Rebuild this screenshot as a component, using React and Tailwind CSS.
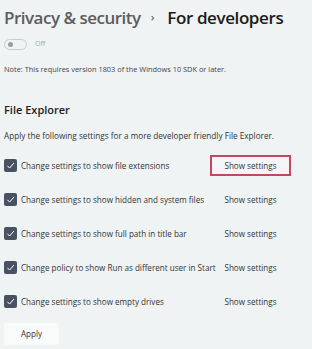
export default function App() {
  const rows = [
    "Change settings to show file extensions",
    "Change settings to show hidden and system files",
    "Change settings to show full path in title bar",
    "Change policy to show Run as different user in Start",
    "Change settings to show empty drives",
  ];
  return (
    <div
      className="h-[349px] w-[312px] overflow-hidden bg-[#eff3f4] pl-[4px] text-[#2a2a2a]"
      style={{ fontFamily: '"Open Sans", "Noto Sans", sans-serif' }}
    >
      <div className="flex h-[33px] items-center pt-[2px]">
        <span className="text-[17px] font-semibold tracking-[-0.5px] text-[#5c5c5c]">Privacy &amp; security</span>
        <span className="ml-[10px] mr-[13px] text-[11px] font-semibold text-[#6a6a6a]">›</span>
        <span className="text-[17px] font-semibold tracking-[-0.4px] text-[#1b1b1b]">For developers</span>
      </div>
      <div className="mt-[6px] flex h-[11px] items-center">
        <div className="flex h-[11px] w-[23px] items-center rounded-full border border-[#c8cccd] pl-[3px]">
          <div className="h-[5px] w-[5px] rounded-full bg-[#9a9d9e]" />
        </div>
        <span className="ml-[8px] text-[7px] text-[#a4a7a8]">Off</span>
      </div>
      <div className="mt-[14px] text-[7.4px] text-[#444]">
        Note: This requires version 1803 of the Windows 10 SDK or later.
      </div>
      <div className="mt-[27px] text-[11px] font-semibold text-[#1d1d1d]">File Explorer</div>
      <div className="mt-[11px] text-[8.2px] text-[#333]">
        Apply the following settings for a more developer friendly File Explorer.
      </div>
      <div className="mt-[7px] flex flex-col">
        {rows.map((r, i) => (
          <div key={i} className="flex h-[34px] items-center">
            <div className="flex h-[13px] w-[13px] shrink-0 items-center justify-center rounded-[2px] bg-[#4a5262]">
              <svg width="9" height="9" viewBox="0 0 10 10" fill="none">
                <path d="M1.5 5.3 L4 7.8 L8.8 2.3" stroke="#fff" strokeWidth="1.1" />
              </svg>
            </div>
            <span className="ml-[4px] w-[189px] whitespace-nowrap text-[8.1px] text-[#333]">{r}</span>
            <div
              className={
                "flex h-[21px] w-[81px] items-center justify-center text-[8.1px] text-[#333] " +
                (i === 0 ? "border-2 border-[#c2475f] bg-[#f3f5f6]" : "")
              }
            >
              Show settings
            </div>
          </div>
        ))}
      </div>
      <div className="mt-[4px] flex h-[22px] w-[55px] items-center justify-center rounded-[2px] bg-[#f9fafa] text-[8.1px] text-[#333]">
        Apply
      </div>
    </div>
  );
}
